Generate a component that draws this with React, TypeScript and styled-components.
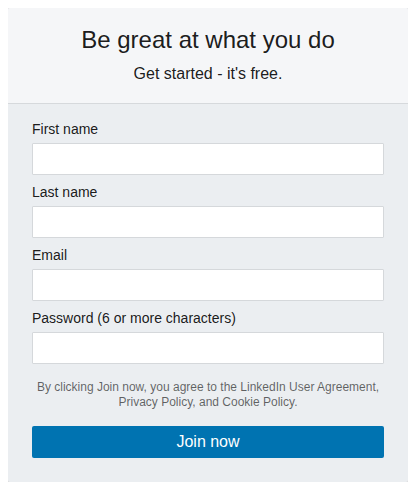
import React from "react";
import styled, { createGlobalStyle } from "styled-components";

const GlobalStyle = createGlobalStyle`
  body {
    margin: 8px;
    background: #ffffff;
    font-family: "Liberation Sans", Arial, sans-serif;
  }
  * { box-sizing: border-box; }
`;

const Card = styled.div`
  width: 400px;
  background: #ebeef1;
  border-radius: 2px;
  box-shadow: 0 0 0 1px rgba(0, 0, 0, 0.08), 0 1px 8px rgba(0, 0, 0, 0.22);
  overflow: hidden;
`;

const Header = styled.div`
  background: #f5f6f8;
  border-bottom: 1px solid #d6d9dc;
  padding: 18px 24px 19px;
  text-align: center;
`;

const Title = styled.h1`
  margin: 0;
  font-size: 24px;
  line-height: 28px;
  font-weight: 400;
  color: rgba(0, 0, 0, 0.9);
`;

const Subtitle = styled.p`
  margin: 10px 0 0;
  font-size: 16px;
  line-height: 20px;
  color: rgba(0, 0, 0, 0.9);
`;

const Form = styled.form`
  padding: 15px 24px 24px;
  display: flex;
  flex-direction: column;
`;

const Field = styled.div`
  display: flex;
  flex-direction: column;
  margin-bottom: 7px;
`;

const Label = styled.label`
  font-size: 14px;
  line-height: 20px;
  color: rgba(0, 0, 0, 0.9);
  margin-bottom: 4px;
`;

const Input = styled.input`
  height: 32px;
  width: 100%;
  background: #ffffff;
  border: 1px solid #d5d8db;
  border-radius: 1px;
  padding: 0 8px;
  font-family: inherit;
  font-size: 14px;
  outline: none;
`;

const Terms = styled.p`
  margin: 9px 0 16px;
  font-size: 12px;
  line-height: 15px;
  color: rgba(0, 0, 0, 0.6);
  text-align: center;
`;

const JoinButton = styled.button`
  height: 32px;
  width: 100%;
  border: none;
  border-radius: 2px;
  background: #0073b1;
  color: #ffffff;
  font-family: inherit;
  font-size: 16px;
  cursor: pointer;
`;

const fields = [
  { id: "first", label: "First name", type: "text" },
  { id: "last", label: "Last name", type: "text" },
  { id: "email", label: "Email", type: "email" },
  { id: "password", label: "Password (6 or more characters)", type: "password" },
];

export default function App() {
  return (
    <>
      <GlobalStyle />
      <Card>
        <Header>
          <Title>Be great at what you do</Title>
          <Subtitle>Get started - it's free.</Subtitle>
        </Header>
        <Form onSubmit={(e) => e.preventDefault()}>
          {fields.map((f) => (
            <Field key={f.id}>
              <Label htmlFor={f.id}>{f.label}</Label>
              <Input id={f.id} type={f.type} />
            </Field>
          ))}
          <Terms>
            By clicking Join now, you agree to the LinkedIn User Agreement,
            Privacy Policy, and Cookie Policy.
          </Terms>
          <JoinButton type="submit">Join now</JoinButton>
        </Form>
      </Card>
    </>
  );
}
